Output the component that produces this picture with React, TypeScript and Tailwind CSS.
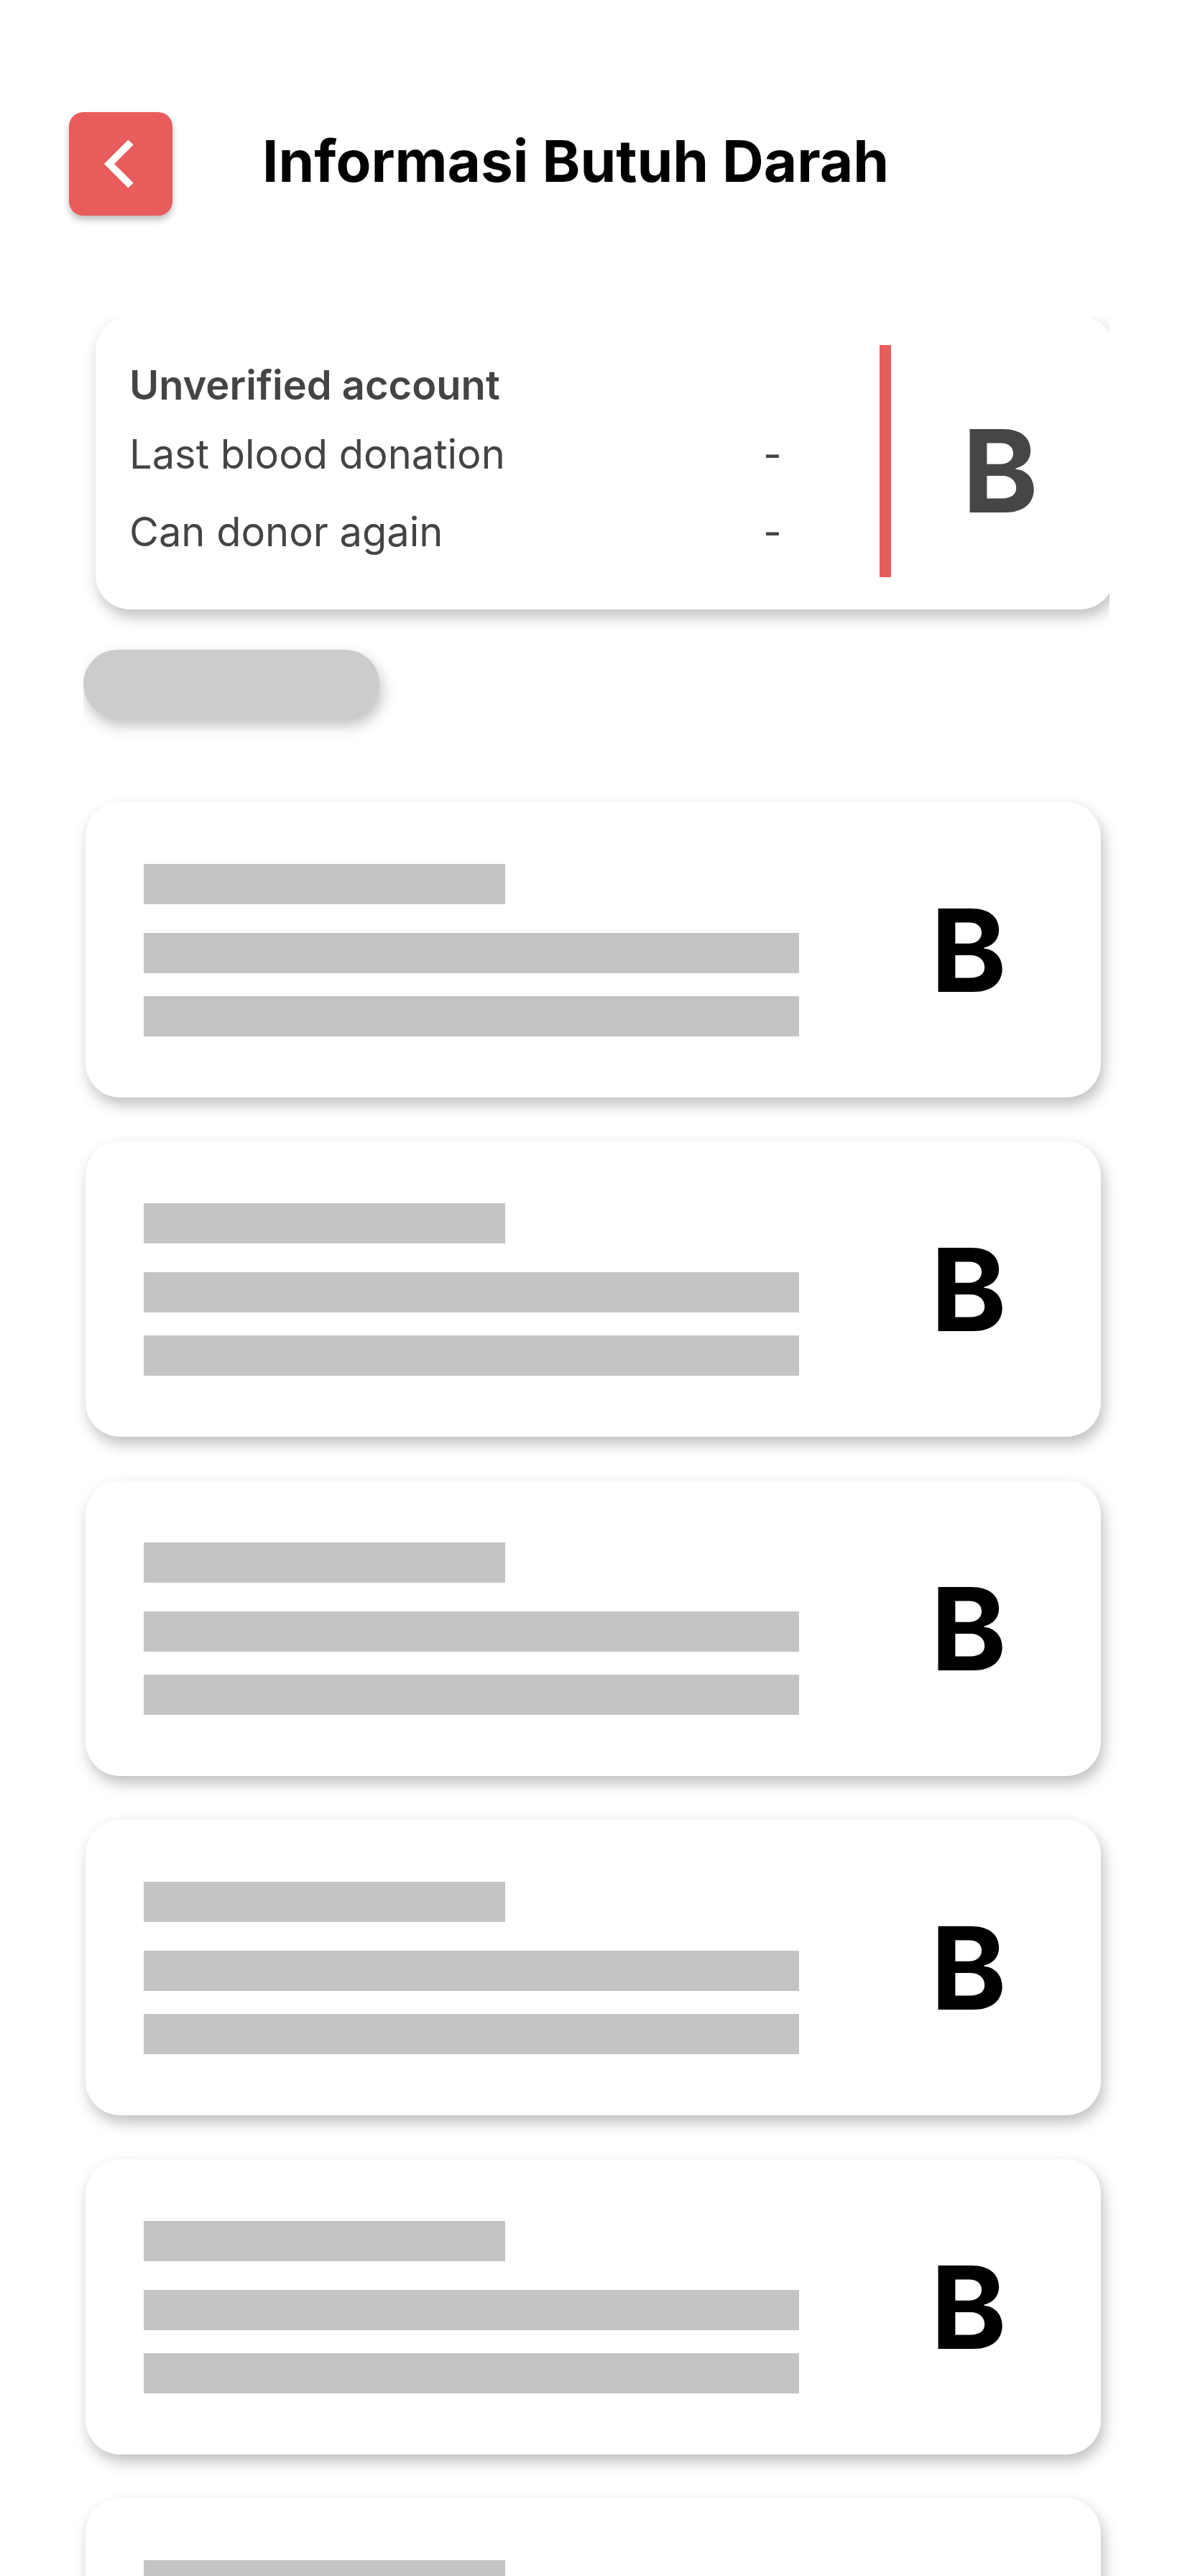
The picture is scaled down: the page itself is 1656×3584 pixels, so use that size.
const cards = [1, 2, 3, 4, 5, 6, 7];

const InfoRow = ({ label, className = "" }: { label: string; className?: string }) => (
  <div className={`flex h-[96px] items-center leading-[96px] ${className}`}>
    <span className="w-[882px]">{label}</span>
    <span>-</span>
  </div>
);

const SkeletonCard = () => (
  <div className="flex h-[411px] w-[1413px] shrink-0 items-center rounded-[48px] bg-white pl-[81px] shadow-[4px_10px_20px_rgba(0,0,0,0.25)]">
    <div className="flex w-[912px] flex-col">
      <div className="h-[56px] w-[503px] bg-[#c4c4c4]" />
      <div className="mt-[40px] h-[56px] w-[912px] bg-[#c4c4c4]" />
      <div className="mt-[32px] h-[56px] w-[912px] bg-[#c4c4c4]" />
    </div>
    <span className="ml-[183px] text-[160px] font-bold leading-none text-black">B</span>
  </div>
);

export default function App() {
  return (
    <div className="min-h-[3584px] w-[1656px] overflow-hidden bg-white font-['Inter',sans-serif]">
      {/* header */}
      <div className="flex items-center pl-[96px] pt-[156px]">
        <button className="flex h-[144px] w-[144px] items-center justify-center rounded-[20px] bg-[#e95c5c] shadow-[0_6px_10px_rgba(0,0,0,0.25)]">
          <svg width="144" height="144" viewBox="0 0 144 144">
            <polyline points="86,42 56,72 86,102" fill="none" stroke="white" strokeWidth="10" />
          </svg>
        </button>
        <h1 className="-mt-[8px] ml-[125px] text-[80px] font-bold leading-none text-black">Informasi Butuh Darah</h1>
      </div>

      {/* profile card, scrollable row */}
      <div className="ml-[116px] mt-[140px] w-[1428px] overflow-hidden pb-[36px] pl-[17px]">
        <div className="flex h-[408px] w-[1418px] items-start rounded-[48px] bg-white pl-[47px] pt-[48px] shadow-[4px_10px_20px_rgba(0,0,0,0.25)]">
          <div className="w-[1044px] text-[56px] text-[#444]">
            <div className="h-[96px] font-semibold leading-[96px]">Unverified account</div>
            <InfoRow label="Last blood donation" />
            <InfoRow label="Can donor again" className="mt-[12px]" />
          </div>
          <div className="-mt-[8px] h-[323px] w-[16px] bg-[#e95c5c]" />
          <span className="ml-[99px] mt-[87px] text-[160px] font-bold leading-none text-[#464646]">B</span>
        </div>
        <div className="-ml-[17px] mt-[56px] h-[95px] w-[412px] rounded-full bg-[#cccccc] shadow-[4px_10px_20px_rgba(0,0,0,0.25)]" />
      </div>

      {/* list */}
      <div className="ml-[119px] mt-[81px] flex flex-col gap-[61px]">
        {cards.map((c) => (
          <SkeletonCard key={c} />
        ))}
      </div>
    </div>
  );
}
